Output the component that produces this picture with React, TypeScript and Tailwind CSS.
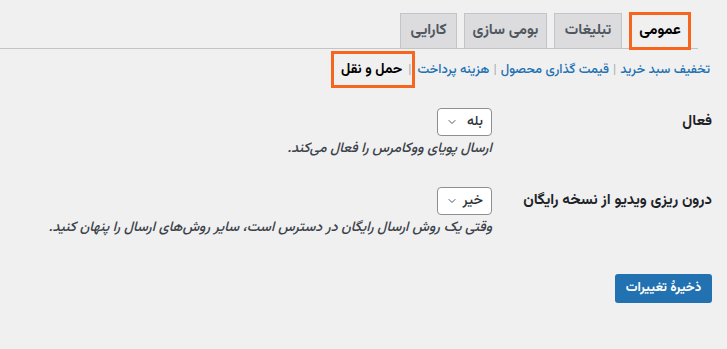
import { ChevronDown } from "lucide-react";

// WooCommerce-style settings screen (RTL): top tabs, sub-section links, two
// yes/no fields and the save button.

const font = {
  fontFamily: '"Vazirmatn", "Noto Sans Arabic", "Noto Naskh Arabic", "DejaVu Sans", sans-serif',
};

const tabs = [
  { label: "عمومی", width: "w-[62px]", active: true },
  { label: "تبلیغات", width: "w-[68px]" },
  { label: "بومی سازی", width: "w-[83px]" },
  { label: "کارایی", width: "w-[57px]" },
];

const sections = ["تخفیف سبد خرید", "قیمت گذاری محصول", "هزینه پرداخت"];

function SelectBox({ value }: { value: string }) {
  return (
    <div className="flex h-[28px] w-[55px] items-center justify-between rounded-[4px] border border-[#8c8f94] bg-white pl-[8px] pr-[8px]">
      <span className="text-[14px] font-medium leading-none text-[#2c3338]">{value}</span>
      <ChevronDown size={12} strokeWidth={2} className="text-[#50575e]" />
    </div>
  );
}

function Field({ label, value, help }: { label: string; value: string; help: string }) {
  return (
    <div className="flex items-start">
      <div className="flex h-[28px] w-[220px] shrink-0 items-center text-[15px] font-bold text-[#1d2327]">
        {label}
      </div>
      <div className="flex flex-col items-start">
        <SelectBox value={value} />
        <p className="mt-[3px] whitespace-nowrap text-[14px] font-medium italic text-[#3c434a]">{help}</p>
      </div>
    </div>
  );
}

export default function App() {
  return (
    <div dir="rtl" style={font} className="h-[349px] w-[727px] overflow-hidden bg-[#f0f0f1]">
      <div className="pr-[15px]">
        <div className="mr-[14px] flex h-[49px] items-end gap-[7px] border-b border-[#c3c4c7] pr-[7px]">
          {tabs.map((t) =>
            t.active ? (
              <div
                key={t.label}
                className={`relative -mb-[2px] flex h-[38px] items-center justify-center border-[3px] border-[#f7661f] bg-[#f0f0f1] text-[15px] font-bold text-black ${t.width}`}
              >
                {t.label}
              </div>
            ) : (
              <div
                key={t.label}
                className={`-mb-px flex h-[36px] items-center justify-center border border-[#c3c4c7] bg-[#dcdcde] text-[15px] font-bold text-[#50575e] ${t.width}`}
              >
                {t.label}
              </div>
            )
          )}
        </div>

        <div className="mt-[2px] flex h-[37px] items-center pr-[2px] pt-[2px] text-[13px] font-medium">
          {sections.map((s, i) => (
            <span key={s} className="flex items-center">
              {i > 0 && <span className="mx-[4px] font-normal text-[#a7aaad]">|</span>}
              <span className="text-[#2271b1]">{s}</span>
            </span>
          ))}
          <span className="-mt-[2px] mr-[2px] flex h-[37px] items-center border-[3px] border-[#f7661f] pl-[7px] pr-[1px] pt-[2px]">
            <span className="font-normal text-[#a7aaad]">|</span>
            <span className="mr-[6px] text-[14px] font-bold text-black">حمل و نقل</span>
          </span>
        </div>

        <div className="mt-[20px] flex flex-col gap-[27px]">
          <Field label="فعال" value="بله" help="ارسال پویای ووکامرس را فعال می‌کند." />
          <Field
            label="درون ریزی ویدیو از نسخه رایگان"
            value="خیر"
            help="وقتی یک روش ارسال رایگان در دسترس است، سایر روش‌های ارسال را پنهان کنید."
          />
        </div>

        <button className="mt-[35px] flex h-[29px] w-[97px] items-center justify-center rounded-[3px] bg-[#2271b1] text-[13px] font-bold text-white">
          ذخیرهٔ تغییرات
        </button>
      </div>
    </div>
  );
}
